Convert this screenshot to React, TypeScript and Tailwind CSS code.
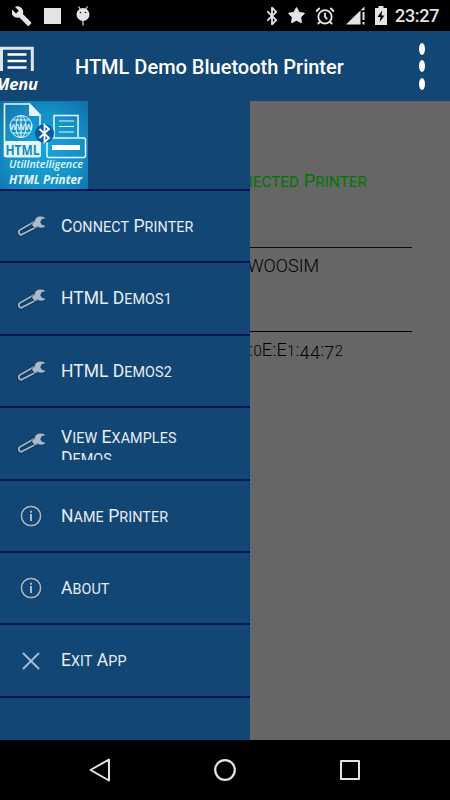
import type { ReactNode } from 'react'
import { Bluetooth, Star, AlarmClock, X } from 'lucide-react'

type MenuIcon = 'wrench' | 'info' | 'close'

interface MenuItem {
  label: string
  icon: MenuIcon
}

const MENU_ITEMS: MenuItem[] = [
  { label: 'Connect Printer', icon: 'wrench' },
  { label: 'HTML Demos1', icon: 'wrench' },
  { label: 'HTML Demos2', icon: 'wrench' },
  { label: 'View Examples Demos', icon: 'wrench' },
  { label: 'Name Printer', icon: 'info' },
  { label: 'About', icon: 'info' },
  { label: 'Exit App', icon: 'close' },
]

// Capitals stay full size, lowercase runs and digits are drawn as small capitals,
// 4 and 7 hang below the baseline like old-style figures
function SmallCaps({ text }: { text: string }) {
  const parts = text.match(/[a-z0-3]+|[47]+|[^a-z0-9]+/g) ?? []
  return (
    <span>
      {parts.map((part, i) => {
        if (/[47]/.test(part)) return <span key={i} className="relative top-[3px]">{part}</span>
        if (/[a-z0-3]/.test(part)) return <span key={i} className="text-[0.82em] uppercase tracking-[0.1px]">{part}</span>
        return <span key={i}>{part}</span>
      })}
    </span>
  )
}

function WrenchIcon() {
  return (
    <svg viewBox="0 0 30 24" className="h-6 w-[30px]" fill="none" strokeLinejoin="round">
      <path
        d="M19.500 7 3.800 16c-1.900 1.100-.9 5 1.700 4.700L21.500 12.500"
        stroke="#0b3154"
        strokeWidth="3.600"
      />
      <path
        d="M19.500 7 3.800 16c-1.900 1.100-.9 5 1.700 4.700L21.500 12.500"
        stroke="#9fb3c6"
        strokeWidth="1.900"
      />
      <path
        d="M29 3.500c-3-2-7.500-1.800-9.200.6-1.100 1.500-1.200 2.500-1.100 3.500l-3.200 2.100 2.500 4.500 3.400-1.500c2.500 1.800 6.200 1.500 7.600.1v-1.700l-3-.4-1.400-2.500 1.300-3 3.100-.3z"
        fill="#a9bccd"
        stroke="#0b3154"
        strokeWidth="0.500"
      />
    </svg>
  )
}

function InfoIcon() {
  return (
    <svg viewBox="0 0 24 24" className="h-6 w-6" fill="none">
      <circle cx="12" cy="12" r="9.600" stroke="#0b3154" strokeWidth="3" />
      <circle cx="12" cy="12" r="9.600" stroke="#a3b6c8" strokeWidth="1.700" />
      <path d="M12 10v7M12 6.800v1.900" stroke="#a9bccd" strokeWidth="2" />
    </svg>
  )
}

function ItemIcon({ icon }: { icon: MenuIcon }) {
  if (icon === 'wrench') return <WrenchIcon />
  if (icon === 'info') return <InfoIcon />
  return <X size={30} strokeWidth={1.5} color="#a9bccd" />
}

function StatusBar() {
  return (
    <div className="flex h-[31px] items-center justify-between bg-black pl-3 pr-[10px] text-[#e4e4e4]">
      <div className="flex items-center">
        <svg viewBox="0 0 22 22" className="h-[22px] w-[21px]" fill="#e4e4e4">
          <path d="M20 17.6 11.4 9c.8-2.2.3-4.7-1.5-6.4C8 .7 5.200.4 3 1.400L7.100 5.400 4.200 8.300.1 4.300c-1.100 2.200-.6 5 1.300 6.800 1.700 1.700 4.200 2.200 6.400 1.400l8.600 8.600c.4.4 1 .4 1.400 0l2.200-2.200c.4-.4.4-1 0-1.300z" />
        </svg>
        <span className="ml-[11px] h-4 w-[17px] bg-[#e4e4e4]" />
        <svg viewBox="0 0 14 20" className="ml-[15px] h-5 w-[14px]">
          <path d="m2.500.5 2 3M11.500.5l-2 3M7 14v5.500" stroke="#e4e4e4" strokeWidth="1.200" />
          <circle cx="7" cy="8.500" r="6.500" fill="#e4e4e4" />
          <circle cx="4.500" cy="6.500" r=".8" fill="#000" />
          <circle cx="9.500" cy="6.500" r=".8" fill="#000" />
        </svg>
      </div>
      <div className="flex items-center">
        <Bluetooth size={20} strokeWidth={2.2} />
        <Star size={19} strokeWidth={1} fill="#e4e4e4" className="ml-[5px]" />
        <AlarmClock size={20} strokeWidth={2.2} className="ml-[9px]" />
        <svg viewBox="0 0 20 19" className="ml-[11px] h-[19px] w-5" fill="#e4e4e4">
          <path d="M0 18.500 18.500.5v3.700h-4v14.300z" />
          <path d="M16.500 6h2v8h-2zM16.500 16h2v2.500h-2z" />
        </svg>
        <svg viewBox="0 0 12 19" className="ml-[9px] h-[19px] w-3">
          <path d="M3.500 0h5v2H12v17H0V2h3.500z" fill="#e4e4e4" />
          <path d="M7.200 4.500 2.500 11H5.500l-.8 5L9.500 9.500H6.500z" fill="#000" />
        </svg>
        <span className="ml-[8px] w-[45px] whitespace-nowrap text-[18px] font-medium leading-none tracking-[-0.3px]">23:27</span>
      </div>
    </div>
  )
}

function AppBar() {
  return (
    <header className="flex h-[70px] items-center bg-[#114675] text-white">
      <div className="flex w-[75px] flex-col pt-[9px]">
        <svg viewBox="0 0 35 26" className="h-[26px] w-[35px]" fill="none" stroke="#fff">
          <path d="M1.500 25V2.200h30.800V25" stroke="#dbe6ef" strokeWidth="3" />
          <path d="M7.500 8.500h19M7.500 15h19M7.500 21.500h19" strokeWidth="2.600" />
        </svg>
        <span className="-ml-[5px] mt-[1px] font-['Open_Sans'] text-[16.500px] font-bold italic leading-[22px] tracking-[-0.2px]">Menu</span>
      </div>
      <h1 className="flex-1 whitespace-nowrap pt-[2px] text-[20px] font-medium">
        HTML Demo Bluetooth Printer
      </h1>
      <div className="mr-[25px] flex flex-col gap-[5.500px]">
        <span className="h-3 w-[6px] rounded-[50%] bg-white" />
        <span className="h-3 w-[6px] rounded-[50%] bg-white" />
        <span className="h-3 w-[6px] rounded-[50%] bg-white" />
      </div>
    </header>
  )
}

function Logo() {
  return (
    <svg viewBox="0 0 88 88" className="h-[88px] w-[88px]" fill="none" stroke="#e6f6fc">
      <defs>
        <radialGradient id="logoBg" cx="50%" cy="55%" r="75%">
          <stop offset="0%" stopColor="#16a5da" />
          <stop offset="55%" stopColor="#1592c7" />
          <stop offset="100%" stopColor="#116ba5" />
        </radialGradient>
      </defs>
      <rect width="88" height="88" fill="url(#logoBg)" stroke="none" />
      <path d="M4.500 3h25L40 14v41H4.500z" strokeWidth="1.600" />
      <path d="M29.500 2.500v12H40.500z" fill="#e6f6fc" strokeWidth="1" />
      <path d="M4 40h36.500v14.500q0 2-2 2H6q-2 0-2-2z" fill="#e6f6fc" stroke="none" />
      <g strokeWidth="1">
        <circle cx="21" cy="25.500" r="11" />
        <ellipse cx="21" cy="25.500" rx="5" ry="11" />
        <path d="M21 14.500v22M12.500 19h17M12.500 32h17" />
      </g>
      <g stroke="none" fontFamily="Open Sans, sans-serif" fontWeight="600">
        <text x="9.500" y="28.500" fontSize="8" fill="#e6f6fc" textLength="23" lengthAdjust="spacingAndGlyphs">WWW</text>
        <text x="5.500" y="53.500" fontSize="15" fontWeight="700" fill="#168ac0" textLength="34" lengthAdjust="spacingAndGlyphs">HTML</text>
        <g fill="#e6f6fc" fontStyle="italic">
          <text x="9" y="67" fontSize="10.500" textLength="74" lengthAdjust="spacingAndGlyphs">UtilIntelligence</text>
          <text x="9" y="82.500" fontSize="12" fontWeight="700" textLength="73" lengthAdjust="spacingAndGlyphs">HTML Printer</text>
        </g>
      </g>
      <path d="M54 36V14.500h24V36" strokeWidth="1.500" />
      <path d="M59 20h15M59 25.500h15M59 31h15" strokeWidth="1.100" />
      <rect x="47" y="37" width="38.500" height="19.500" rx="2" strokeWidth="1.500" />
      <path d="M52 46.500h28" stroke="#fff" strokeWidth="5" />
      <circle cx="44.500" cy="32.500" r="9.500" fill="#075ba6" stroke="none" />
      <path d="m39.500 28 9.500 9-4.500 4V24l4.500 4-9.500 9" stroke="#fff" strokeWidth="1.800" />
    </svg>
  )
}

function MenuRow({ label, icon }: MenuItem) {
  return (
    <li className="flex h-[72.400px] items-center border-b-2 border-[#00145a]">
      <span className="flex w-[61px] shrink-0 justify-center">
        <ItemIcon icon={icon} />
      </span>
      <span className="max-h-[34px] w-[145px] overflow-hidden pt-[2px] text-[17.500px] leading-[19.500px] text-[#e8edf2]">
        <SmallCaps text={label} />
      </span>
    </li>
  )
}

function Field({ className, children }: { className: string; children: ReactNode }) {
  return <div className={`flex justify-end whitespace-nowrap leading-6 ${className}`}>{children}</div>
}

function NavBar() {
  return (
    <nav className="flex h-[60px] items-center justify-between bg-black px-[88px]">
      <svg viewBox="0 0 24 24" className="h-6 w-6" fill="none" stroke="#e4e4e4" strokeWidth="2" strokeLinejoin="round">
        <path d="M21 1.500v21L2.500 12z" />
      </svg>
      <svg viewBox="0 0 24 24" className="h-6 w-6" fill="none" stroke="#e4e4e4" strokeWidth="2.200">
        <circle cx="12" cy="12" r="9.800" />
      </svg>
      <svg viewBox="0 0 24 24" className="h-6 w-6" fill="none" stroke="#e4e4e4" strokeWidth="2" strokeLinejoin="round">
        <path d="M3 3h18v18H3z" />
      </svg>
    </nav>
  )
}

export default function App() {
  return (
    <div className="flex h-[800px] w-[450px] flex-col overflow-hidden bg-black font-['Roboto',sans-serif]">
      <StatusBar />
      <AppBar />
      <div className="flex h-[639px] bg-[#666666]">
        <aside className="w-[250px] shrink-0 overflow-hidden bg-[#114675]">
          <div className="h-[90px] border-b-2 border-[#00145a]">
            <Logo />
          </div>
          <ul>
            {MENU_ITEMS.map((item) => (
              <MenuRow key={item.label} {...item} />
            ))}
          </ul>
        </aside>
        <main className="w-[162px] overflow-hidden pt-[68px] text-[18px] text-black">
          <Field className="pr-[45px] text-[18.500px] text-[#007600]">
            <SmallCaps text="Connected Printer" />
          </Field>
          <div className="mt-[53px] h-px bg-[#0c0c0c]" />
          <Field className="mt-[6px] pr-[93px] font-light">WOOSIM</Field>
          <div className="mt-[53px] h-px bg-black" />
          <Field className="mt-[6px] pr-[69px] font-light tracking-[0.350px]">
            <SmallCaps text=":0E:E1:44:72" />
          </Field>
        </main>
      </div>
      <NavBar />
    </div>
  )
}
